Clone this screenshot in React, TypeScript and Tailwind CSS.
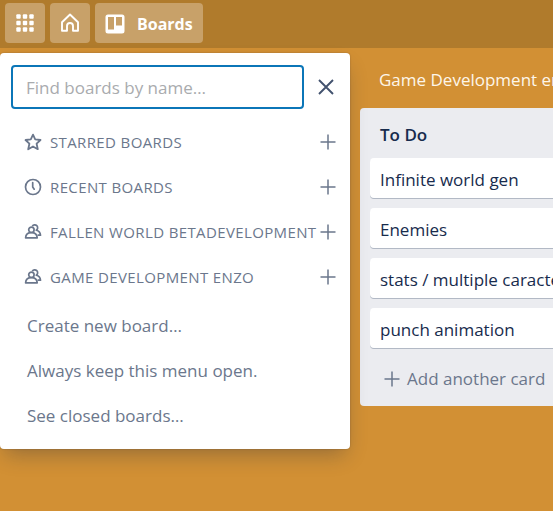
import type { ReactNode } from "react";

function StarIcon() {
  return (
    <svg viewBox="0 0 18 18" className="size-[18px]" fill="none" stroke="currentColor" strokeWidth="1.8" strokeLinejoin="round" aria-hidden="true">
      <path d="M9 1.6 11.2 6.3 16.5 7 12.6 10.7 13.8 16.200 9 13.5 4.200 16.200 5.400 10.7 1.5 7 6.800 6.3Z" />
    </svg>
  );
}

function ClockIcon() {
  return (
    <svg viewBox="0 0 18 18" className="size-[18px]" fill="none" stroke="currentColor" strokeWidth="1.7" strokeLinecap="round" strokeLinejoin="round" aria-hidden="true">
      <circle cx="9" cy="9" r="7.5" />
      <path d="M8.700 4.500V9l1.500 2.200" />
    </svg>
  );
}

function TeamIcon() {
  return (
    <svg viewBox="0 0 18 18" className="size-[18px]" fill="none" stroke="currentColor" strokeWidth="1.7" strokeLinejoin="round" aria-hidden="true">
      <circle cx="7.4" cy="6.800" r="2.7" />
      <path d="M1.6 14.800c.2-3.200 2.500-5.100 5.800-5.100s5.600 1.900 5.800 5.100Z" />
      <path d="M8.300 3.200A2.900 2.900 0 1 1 12.300 7.200C15 7.900 16.400 9.600 16.500 12.200H13.600" />
    </svg>
  );
}

function PlusIcon() {
  return (
    <svg viewBox="0 0 16 16" className="size-4" fill="none" stroke="currentColor" strokeWidth="1.5" aria-hidden="true">
      <path d="M8 .5v15M.5 8h15" />
    </svg>
  );
}

function CloseIcon() {
  return (
    <svg viewBox="0 0 16 16" className="size-4" fill="none" stroke="currentColor" strokeWidth="1.9" aria-hidden="true">
      <path d="m1 1 14 14M15 1 1 15" />
    </svg>
  );
}

function AppsIcon() {
  return (
    <svg viewBox="0 0 18 18" className="size-[18px]" fill="currentColor" aria-hidden="true">
      {[0, 6.5, 13].map((y) =>
        [0, 6.5, 13].map((x) => <rect key={`${x}-${y}`} x={x + 0.3} y={y + 0.3} width="4.4" height="4.4" rx="1" />),
      )}
    </svg>
  );
}

function HomeIcon() {
  return (
    <svg viewBox="0 0 20 20" className="size-5" fill="none" stroke="currentColor" strokeWidth="1.9" strokeLinejoin="round" strokeLinecap="round" aria-hidden="true">
      <path d="M2 9.200 10 1.500 18 9.200V17.800H13V13a3 3 0 0 0-6 0V17.800H2Z" />
    </svg>
  );
}

function BoardIcon() {
  return (
    <svg viewBox="0 0 20 20" className="size-5" aria-hidden="true">
      <path
        fill="currentColor"
        fillRule="evenodd"
        d="M3 .5h14A2.500 2.500 0 0 1 19.500 3v14a2.500 2.500 0 0 1-2.500 2.500H3A2.500 2.500 0 0 1 .5 17V3A2.500 2.500 0 0 1 3 .5ZM3 3v12.500h6V3ZM11 3v8.500h6V3Z"
      />
    </svg>
  );
}

const sections: { title: string; icon: ReactNode }[] = [
  { title: "Starred Boards", icon: <StarIcon /> },
  { title: "Recent Boards", icon: <ClockIcon /> },
  { title: "Fallen World BetaDevelopment", icon: <TeamIcon /> },
  { title: "Game Development Enzo", icon: <TeamIcon /> },
];

const links = ["Create new board…", "Always keep this menu open.", "See closed boards…"];

const cards = ["Infinite world gen", "Enemies", "stats / multiple caracters", "punch animation"];

function BoardsMenu() {
  return (
    <aside className="absolute left-0 top-[53px] w-[350px] rounded bg-white px-[11px] pt-3 pb-[11px] text-[#6b778c] shadow-[0_10px_20px_-5px_rgba(9,30,66,0.3),0_0_1px_1px_rgba(9,30,66,0.08)]">
      <div className="flex items-center">
        <input
          type="text"
          aria-label="Find boards by name"
          placeholder="Find boards by name…"
          className="h-11 min-w-0 flex-1 rounded border-2 border-[#0b76b8] bg-white px-[13px] text-[#172b4d] outline-none placeholder:text-[#a9abae]"
        />
        <button type="button" aria-label="Close" className="ml-[14px] mr-[5px] text-[#42526e]">
          <CloseIcon />
        </button>
      </div>
      <ul className="mt-[10px]">
        {sections.map((section) => (
          <li key={section.title} className="flex h-[45px] items-center pl-[13px]">
            {section.icon}
            <h2 className="ml-2 flex-1 whitespace-nowrap text-[15px] uppercase tracking-wide">{section.title}</h2>
            <button type="button" aria-label={`Expand ${section.title}`} className="mr-[3px]">
              <PlusIcon />
            </button>
          </li>
        ))}
      </ul>
      <ul className="mt-1">
        {links.map((link) => (
          <li key={link}>
            <a href="#" className="flex h-[45px] items-center pl-4">
              {link}
            </a>
          </li>
        ))}
      </ul>
    </aside>
  );
}

export default function App() {
  return (
    <div className="relative min-h-screen overflow-hidden bg-[#d29034] font-['Open_Sans','Noto_Sans',sans-serif] text-[17px] leading-6 text-[#172b4d]">
      <header className="flex h-12 items-start gap-[5px] bg-[#b07b2c] px-[5px] pt-[3px] text-white">
        <button type="button" aria-label="Apps" className="flex size-10 items-center justify-center rounded bg-[#c8a169]">
          <AppsIcon />
        </button>
        <button type="button" aria-label="Home" className="flex size-10 items-center justify-center rounded bg-[#c8a169]">
          <HomeIcon />
        </button>
        <button type="button" className="flex h-10 items-center gap-3 rounded bg-[#c8a169] px-[10px] pt-px text-base font-bold">
          <BoardIcon />
          Boards
        </button>
      </header>
      <BoardsMenu />
      <main className="pl-[354px]">
        <div className="flex h-[60px] items-center">
          <span className="h-5 w-px bg-white/25" />
          <a href="#" className="ml-[25px] mt-1 whitespace-nowrap text-[#fdf6ea]">
            Game Development enzo
          </a>
        </div>
        <section className="ml-[6px] w-[340px] rounded bg-[#ebecf0] px-[10px] pb-[6px]">
          <h2 className="flex h-[50px] items-center px-[10px] pt-1 text-[17px] font-semibold">To Do</h2>
          <ul className="flex flex-col gap-[10px]">
            {cards.map((card) => (
              <li key={card} className="flex h-10 items-center rounded bg-white px-[10px] pt-1 shadow-[0_1px_0_rgba(9,30,66,0.25)]">
                {card}
              </li>
            ))}
          </ul>
          <button type="button" className="mt-[10px] flex h-[42px] items-center gap-[7px] px-[14px] text-[#6b778c]">
            <PlusIcon />
            Add another card
          </button>
        </section>
      </main>
    </div>
  );
}
